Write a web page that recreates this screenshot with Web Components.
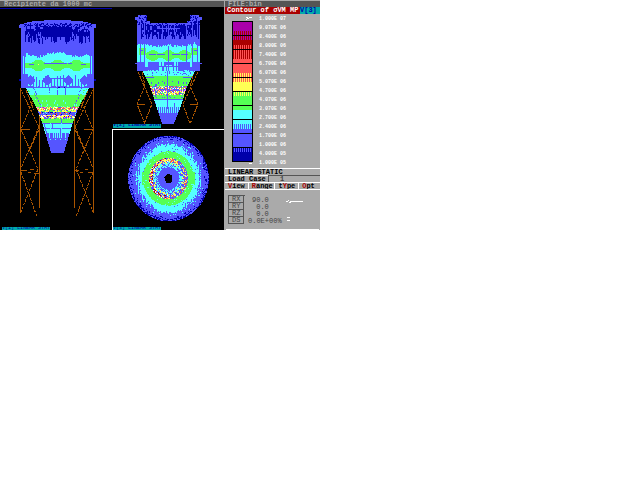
<!DOCTYPE html>
<html lang="it">
<head>
<meta charset="utf-8">
<title>Recipiente da 1000 mc</title>
<style>
body { margin: 0; background: #fff; font: 7px/7px "Liberation Mono", monospace; }
</style>
</head>
<body>
<fem-app></fem-app>
<script>
const C = { b: '#0000aa', p: '#5555ff', c: '#55ffff', g: '#55ff55', y: '#ffff55', r: '#ff5555', d: '#aa0000', m: '#ff55ff', w: '#ffffff' };
const noise = (x, y) => { let h = (x * 374761393 + y * 668265263) | 0; h = Math.imul(h ^ (h >>> 13), 1274126177); return ((h ^ (h >>> 16)) >>> 0) / 4294967296; };
const pick = (s, x, y) => s[Math.floor(noise(x, y) * s.length)];
const near = (x, list, r) => list.some(v => Math.abs(x - v) <= r);
const edge = (y, pts) => {
  for (let i = 1; i < pts.length; i++) if (y <= pts[i][0]) {
    const [a, b] = pts[i - 1], [c, d] = pts[i];
    return Math.round(b + (d - b) * (y - a) / (c - a));
  }
  return pts[pts.length - 1][1];
};

/* Raster of stress colours, one path for each colour */
function paint(x0, y0, w, h, fn) {
  const paths = {};
  for (let y = y0; y < y0 + h; y++) for (let x = x0; x < x0 + w;) {
    const k = fn(x, y); let n = 1;
    while (x + n < x0 + w && fn(x + n, y) === k) n++;
    if (k) paths[k] = (paths[k] || '') + `M${x} ${y}h${n}v1h-${n}z`;
    x += n;
  }
  return Object.entries(paths).map(([k, d]) => `<path fill="${C[k]}" d="${d}"/>`).join('');
}

/* Front elevation */
function front(x, y) {
  const j = (noise(x, 7) - .5) * 5, u = x - 57, a = Math.abs(u);
  if (y < 88) {
    const top = a < 14 ? 20 : a < 26 ? 21 : a < 31 ? 22 : a < 34 ? 23 : 24;
    if (y < top) return '';
    const lim = (y >= 24 && y < 28) || y === 79 || y === 80 ? 38 : 36;
    if (a > lim || (x < 20 && y < 25)) return '';
    if (x === 18 && y === 26) return 'c';
    if (a > 34) return y > 78 && y < 82 && a > 36 ? 'b' : 'p';
    if (y < 24) return y === 23 && noise(x, 1) > .6 ? 'b' : 'p';
    if (y < 27) return noise(x, y) > (a > 14 ? .55 : .4) ? 'b' : 'p';
    if (near(x, [25, 34, 80, 89], 0) && y < 42) return y > 30 ? 'b' : 'p';
    if (a < 15 && y < 37) return 'b';
    if (a < 31 && y < 29) return near(x, [28, 32, 41, 73, 82, 86], 1) ? 'p' : 'b';
    if (a < 32 && y < 36 + j) return noise(x, y >> 1) > .2 ? 'b' : 'p';
    if (y < 41 + j && noise(x, 3) > .6 && a < 30) return 'b';
    const cy = 54 - 2 * Math.cos(u / 6.1) + j * .5 + (a > 31 ? 3 : 0);
    if (near(x, [24, 90], 0) && y > 55 && y < 78) return 'p';
    if (y < cy) return 'p';
    if (x === 38 && y === 64) return 'y';
    if (y === 63 && x > 43 && x < 72 && x !== 67 || y === 64 && near(x, [31, 83], 2)) return 'p';
    const half = a > 30 ? 3 : 4 + 2 * Math.cos(u / 3.05);
    if (Math.abs(y - 65) < half && a < 34) return 'g';
    if (y < 74) return 'c';
    if (y === 78 && a < 15) return 'p';
    const blob = Math.min(...[30, 47, 68, 84].map(v => Math.abs(x - v)));
    if (y < 85 && blob * 1.2 + Math.abs(y - 80) < 6) return 'p';
    if (y > 77 + j && x % 3 === 0) return 'p';
    if (y < 86) return a > 29 ? 'p' : 'c';
    if (y < 87) return noise(x >> 1, 4) > .5 || a > 27 ? 'p' : 'c';
    return a > 24 || noise(x, y) > .2 ? 'p' : 'b';
  }
  const l = edge(y, [[88, 26], [108, 37], [125, 43], [152, 51]]), r = edge(y, [[88, 88], [108, 77], [125, 71], [152, 63]]);
  if (y > 152 || x < l || x > r) return '';
  if (y < 95) return near(x, [l + 7, r - 7, 49, 57, 65], 0) && noise(x, y) > .25 ? 'p' : a > 22 && noise(x, y) > .85 ? 'g' : 'c';
  if (y < 107) return (y > 98 && noise(x, y >> 1) > .93) ? 'c' : near(x, [l + 5, r - 5], 0) && y % 3 ? 'p' : 'g';
  if (y < 110) return pick('yrrmypwgyr', x, y);
  if (y < 112) return pick('yyggyp', x, y);
  if (y < 115) return pick('ppppppbcpr', x, y);
  if (y < 118) return pick('yypwypdm', x, y);
  if (y < 119) return pick('pypg', x, y);
  if (y < 123) return x === 61 ? 'p' : 'g';
  if (y === 123 || y === 128) return near(x, [50, 61], 0) ? 'c' : 'p';
  if (y < 133) return x === (y < 128 ? 52 : 60) || x === l + 1 ? 'p' : 'c';
  if (y < 138) return x % 2 && noise(x, 5) > .2 ? 'c' : 'p';
  return y === 139 && x % 5 === 0 ? 'c' : 'p';
}

/* Section */
function section(x, y) {
  const u = x - 168, a = Math.abs(u), j = (noise(x, 9) - .5) * 4;
  if (y < 71) {
    const top = a > 21 ? (a > 30 ? 17 : 15) : a > 18 ? 21 : 23;
    const lim = y < 20 || y === 63 ? 33 : 31;
    if (y < top || a > lim) return '';
    if (y < 21) return a < 30 && noise(x, y) > .65 ? 'b' : 'p';
    if (near(x, [140, 144, 186, 192, 197], 0) && y < 62) return 'p';
    if (y < 25) return a > 22 ? pick('bbp', x, y) : pick('ppb', x, y);
    if (a < 29 && y < 35 + j) return near(x, [162, 168, 174], 0) || y === 28 && a < 12 ? 'p' : noise(x, y >> 1) > .18 ? 'b' : 'p';
    if (y < 39 && noise(x, 2) > .65) return 'b';
    if (y < 44 + 2 * Math.abs(Math.sin(u / 7)) + j * .6 - (a > 23 ? 2 : 0)) return 'p';
    if (x === 168 && y > 45) return 'p';
    if (y === 54 && a < 20 && a > 3 || y === 50 && a > 25 && a < 29) return a === 12 ? 'g' : 'p';
    if (a > 22 && Math.abs(y - 51) < 4 && a < 30) return 'g';
    if (a < 23 && Math.abs(y - 55) < 4 + 1.6 * Math.cos(u / 2.5)) return 'g';
    if (y < 62) return 'c';
    if (near(x, [153, 183], 5) && y < 70 || a > 23) return 'p';
    if (near(x, [168], 3) && y < 65 || y === 66 && a < 14) return 'p';
    return noise(x, y > 66 ? 12 : 8) > .6 ? 'p' : 'c';
  }
  const l = edge(y, [[71, 143], [86, 150], [108, 157], [123, 162]]), r = edge(y, [[71, 194], [86, 186], [108, 179], [123, 173]]);
  if (y > 123 || x < l || x > r) return '';
  if (x === 167 && y < 109) return 'p';
  if (y < 76) return noise(x, y) > .9 ? 'p' : 'c';
  if (y < 86) return (y === 77 && a > 14) || (y > 80 && noise(x, y >> 1) > .87) ? 'p' : 'g';
  if (y < 89) return pick('yrppcyrwg', x, y);
  if (y < 91) return pick('pppyprm', x, y);
  if (y < 95) return pick('yyppwyrg', x, y);
  if (y < 99) return noise(x, y) > .9 ? 'p' : 'g';
  if (y < 107) return y === 99 || (y > 102 && noise(x, 6) > .75) ? 'p' : 'c';
  if (y < 113) return x % 2 ? 'c' : 'p';
  return 'p';
}

/* Plan */
function plan(x, y) {
  const dx = x - 168, dy = (y - 178) * .94, r = Math.hypot(dx, dy), n = noise(x, y);
  const s = r + (noise(x, 11) - .5) * 2.4, ax = Math.abs(dx), ay = Math.abs(dy);
  if (r > 40.3 || r < 4 + (n > .7 ? .8 : 0)) return '';
  if (r > 38 && n > .5 && ay > 9) return 'b';
  if (r > 36 && n > .84) return 'b';
  if (r < 10.5) return 'p';
  if (r < 13.5) return n > .45 ? 'c' : 'p';
  if (r < 16) return n > .62 ? 'c' : n > .25 ? 'p' : 'y';
  if (r < 19.5) return pick(dx < 0 ? 'pyrpwypydr' : 'pyrpppcyr', x, y);
  if (r < 25.5 || (ay < 6 && r < 27)) return n > .96 ? 'c' : 'g';
  if (s < 30) return n > .96 ? 'p' : 'c';
  if (s < 32) return (x + (n > .8)) % 2 && ax > 14 ? 'p' : 'c';
  if (dx < -33 && n > .94) return pick('ryg', y, x);
  if (ax > 22 && ax < 27 && ay < 22) return x % 2 ? 'c' : 'p';
  if (n > .93 && r < 37) return 'c';
  return 'p';
}

class FemTitle extends HTMLElement {
  constructor() {
    super();
    this.attachShadow({ mode: 'open' }).innerHTML = `<style>
:host { display: block; box-sizing: border-box; background: #555; color: #aaa; border-top: 1px solid #aaa; height: 7px; line-height: 6px; padding-left: 4px; white-space: nowrap; overflow: hidden; font-weight: bold; }
</style><slot></slot>`;
  }
}
customElements.define('fem-title', FemTitle);

class FemView extends HTMLElement {
  constructor() {
    super();
    const kind = this.getAttribute('kind');
    const art = {
      front: ['0 7 112 220', () => `<path stroke="#0000aa" stroke-width="1" d="M0 8.500H112"/>
<g stroke="#aa5500" fill="none"><path d="M20.500 88V213M39.500 108V208M74.500 108V208M93.500 88V213M21 129.500H30M84 129.500H93M21 170.500H27M30 169.500H34M28 172.500H31M34 173.500H39M75 170.500H79M80 172.500H83M85 169.500H88M88 172.500H92"/>
<path stroke-dasharray="3 1" d="M20 88L39 127L21 168M37 92L21 129L38 169L21 212M21 172L37 217M26 90L34 110M39 130L29 151M94 88L75 127L93 168M77 92L93 129L76 169L93 212M93 172L76 217M88 90L80 110M75 130L85 151"/></g>` + paint(17, 20, 80, 134, front)],
      section: ['112 7 112 117', () => `<g stroke="#aa5500" fill="none" stroke-dasharray="3 1"><path d="M138 72L152 104L144 124M142 72L145 86L137 104L145 124M198 72L183 104L190 124M194 72L190 86L198 104L190 124"/><path stroke-dasharray="none" d="M137 104.500H145M190 104.500H198"/></g>` + paint(134, 14, 70, 110, section)],
      plan: ['113 130 111 97', () => paint(126, 134, 84, 88, plan)]
    }[kind];
    this.attachShadow({ mode: 'open' }).innerHTML = `<style>
:host { display: flex; flex-direction: column; background: #000; overflow: hidden; min-width: 0; }
svg { display: block; width: 100%; }
figcaption { width: 48px; height: 3px; margin-left: 2px; overflow: hidden; background: #0aa; color: #00a; font-size: 5px; line-height: 3px; white-space: nowrap; }
:host([kind="section"]) figcaption { height: 4px; font-weight: bold; margin-left: 1px; }
:host([kind="plan"]) { border: solid #fff; border-width: 1px 0 0 1px; }
:host([kind="plan"]) figcaption { margin-left: 0; }
</style><svg viewBox="${art[0]}" shape-rendering="crispEdges" aria-hidden="true">${art[1]()}</svg><figcaption><slot></slot></figcaption>`;
  }
}
customElements.define('fem-view', FemView);

class FemLegend extends HTMLElement {
  constructor() {
    super();
    const rows = ['1.000E 07', '9.070E 06', '8.400E 06', '8.000E 06', '7.400E 06', '6.700E 06', '6.070E 06', '5.070E 06', '4.700E 06', '4.070E 06', '3.070E 06', '2.700E 06', '2.400E 06', '1.700E 06', '1.000E 06', '4.000E 05', '1.000E 05'];
    const seg = [[21, '#aa00aa'], [31, '#aa00aa', '#aa0000', 9], [40, '#aa0000'], [45, '#aa0000', '#ff5555', 14], [59, '#ff5555'], [73, '#ff5555', '#ffff55', 9], [82, '#ffff55'], [91, '#55ff55', '#ffff55', 5], [96, '#55ff55'], [110, '#55ffff'], [124, '#55ffff', '#5555ff', 5], [129, '#5555ff'], [148, '#0000aa', '#5555ff', 4], [152, '#0000aa']];
    let s = '';
    seg.forEach(([y, f, k, h], i) => {
      const e = i + 1 < seg.length ? seg[i + 1][0] : 162;
      s += `<path fill="${f}" d="M232 ${y}h21V${e}h-21z"/>`;
      if (k) for (let x = 234; x < 252; x += 2) s += `<path fill="${k}" d="M${x} ${y}h1v${h}h-1z"/>`;
    });
    for (let y = 35; y < 160; y += 14) s += `<path d="M232 ${y}h21v1h-21z"/>`;
    this.attachShadow({ mode: 'open' }).innerHTML = `<style>
:host { display: grid; grid-template-columns: 28px 1fr; column-gap: 6px; padding: 2px 0; color: #fff; font-size: 5px; line-height: 5px; font-weight: bold; }
svg { display: block; width: 100%; }
ol { list-style: none; margin: 0; padding: 1px 0 0; display: flex; flex-direction: column; justify-content: space-between; }
</style><svg viewBox="225 16 28 150" shape-rendering="crispEdges" role="img" aria-label="Contour scale">${s}<path fill="none" stroke="#000" d="M232.500 21.500h20v140h-20z"/><path fill="none" stroke="#fff" d="M246 17l2 1.500l-2 1.500M249 17.500h3M249 163.500h3"/></svg><ol>${rows.map(r => `<li>${r}</li>`).join('')}</ol>`;
  }
}
customElements.define('fem-legend', FemLegend);

class FemMenu extends HTMLElement {
  constructor() {
    super();
    this.attachShadow({ mode: 'open' }).innerHTML = `<style>
:host { display: block; }
nav { display: grid; grid-template-columns: 24fr 27fr 24fr 21fr; border: solid #fff; border-width: 1px 0; }
button { all: unset; font-weight: bold; height: 6px; line-height: 6px; padding-left: 3px; border-right: 1px solid #fff; overflow: hidden; }
button:last-child { border: 0; }
b { color: #a00; }
</style><nav><button type="button"><b>V</b>iew</button><button type="button"><b>R</b>ange</button><button type="button">t<b>Y</b>pe</button><button type="button"><b>O</b>pt</button></nav>`;
  }
}
customElements.define('fem-menu', FemMenu);

class FemStatus extends HTMLElement {
  constructor() {
    super();
    const rows = [['RX', '90.0'], ['RY', ' 0.0'], ['RZ', ' 0.0'], ['DS', '0.0E+00%']];
    this.attachShadow({ mode: 'open' }).innerHTML = `<style>
:host { display: grid; grid-template-columns: 58px 1fr; align-items: start; padding: 5px 2px 3px; margin: 0 1px; border-bottom: 1px solid #fff; color: #444; }
table { border-collapse: separate; border-spacing: 0; border-top: 1px solid #555; width: 17px; }
th, td { padding: 0; height: 6px; line-height: 6px; white-space: pre; font-weight: normal; }
th { box-sizing: border-box; width: 17px; height: 7px; border: solid #555; border-width: 0 1px 1px 1px; text-align: left; padding-left: 3px; }
td { max-width: 1px; overflow: visible; }
td span { margin-left: 8px; }
tr:last-child span { margin-left: 4px; }
svg { width: 20px; display: block; }
</style><table>${rows.map(r => `<tr><th scope="row">${r[0]}</th><td><span>${r[1]}</span></td></tr>`).join('')}</table>
<svg viewBox="286 195 20 27" shape-rendering="crispEdges" aria-hidden="true"><path fill="none" stroke="#fff" d="M286 201.500h2M288 200.500h1M289 202.500h2M290 201.500h13M287 217.500h3M287 220.500h3"/></svg>`;
  }
}
customElements.define('fem-status', FemStatus);

class FemPanel extends HTMLElement {
  constructor() {
    super();
    this.attachShadow({ mode: 'open' }).innerHTML = `<style>
:host { display: flex; flex-direction: column; background: #aaa; color: #000; border-left: 1px solid #aaa; min-width: 0; white-space: nowrap; }
fem-title { padding-left: 3px; }
.contour { display: grid; grid-template-columns: 1fr 20px; height: 7px; line-height: 7px; font-weight: bold; color: #fff; background: #a00; overflow: hidden; }
.contour span { padding-left: 2px; min-width: 0; }
.contour a { background: #0aa; color: #00a; text-decoration: none; }
.row { border-top: 1px solid #fff; height: 6px; line-height: 6px; padding-left: 3px; font-weight: bold; }
.case { display: grid; grid-template-columns: 40px 1fr; }
.case output { border-left: 1px solid #555; border-top: 1px solid #555; margin-top: -1px; padding-left: 11px; color: #444; }
fem-status { flex: 1; }
</style><fem-title>FILE:bin</fem-title>
<div class="contour"><span>Contour of σVM MP</span><a href="#view">V[3]</a></div>
<fem-legend></fem-legend>
<div class="row">LINEAR STATIC</div>
<div class="row case"><label for="lc">Load Case</label><output id="lc">1</output></div>
<fem-menu></fem-menu>
<fem-status></fem-status>`;
  }
}
customElements.define('fem-panel', FemPanel);

class FemApp extends HTMLElement {
  constructor() {
    super();
    this.attachShadow({ mode: 'open' }).innerHTML = `<style>
:host { display: grid; width: 50%; grid-template-columns: 7fr 7fr 6fr; grid-template-rows: auto auto 1fr; background: #000; }
fem-title { grid-column: 1 / 3; }
fem-view[kind="front"] { grid-column: 1; grid-row: 2 / 4; }
fem-view[kind="section"] { grid-column: 2; grid-row: 2; padding-bottom: 1px; }
fem-view[kind="plan"] { grid-column: 2; grid-row: 3; }
fem-panel { grid-column: 3; grid-row: 1 / 4; }
</style><fem-title>Recipiente da 1000 mc</fem-title>
<fem-view kind="front">V[1] LINEAR STAT</fem-view>
<fem-view kind="section">V[2] LINEAR STAT</fem-view>
<fem-view kind="plan">V[3] LINEAR STAT</fem-view>
<fem-panel></fem-panel>`;
  }
}
customElements.define('fem-app', FemApp);
</script>
</body>
</html>
